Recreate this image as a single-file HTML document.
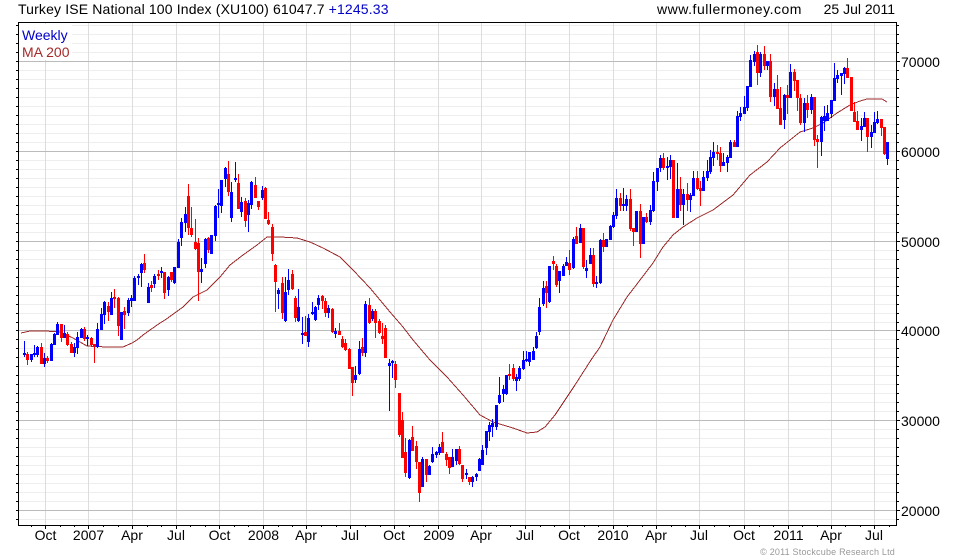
<!DOCTYPE html>
<html><head><meta charset="utf-8"><style>
html,body{margin:0;padding:0;background:#fff;width:980px;height:560px;overflow:hidden}
svg{display:block}
text{font-family:"Liberation Sans",Arial,sans-serif;font-size:14px;fill:#000}
</style></head><body>
<svg width="980" height="560" viewBox="0 0 980 560" xmlns="http://www.w3.org/2000/svg">
<rect width="980" height="560" fill="#fff"/>
<g shape-rendering="crispEdges" fill="none">
<path stroke="#eee" d="M19 25.5H896M19 34.5H896M19 43.5H896M19 52.5H896M19 70.5H896M19 79.5H896M19 88.5H896M19 97.5H896M19 106.5H896M19 115.5H896M19 124.5H896M19 133.5H896M19 142.5H896M19 160.5H896M19 169.5H896M19 178.5H896M19 187.5H896M19 196.5H896M19 205.5H896M19 214.5H896M19 223.5H896M19 232.5H896M19 250.5H896M19 259.5H896M19 268.5H896M19 277.5H896M19 286.5H896M19 295.5H896M19 304.5H896M19 313.5H896M19 322.5H896M19 339.5H896M19 348.5H896M19 357.5H896M19 366.5H896M19 375.5H896M19 384.5H896M19 393.5H896M19 402.5H896M19 411.5H896M19 429.5H896M19 438.5H896M19 447.5H896M19 456.5H896M19 465.5H896M19 474.5H896M19 483.5H896M19 492.5H896M19 501.5H896M19 519.5H896"/>
<path stroke="#ddd" d="M45.5 23V525M88.5 23V525M132.5 23V525M176.5 23V525M219.5 23V525M263.5 23V525M306.5 23V525M350.5 23V525M394.5 23V525M438.5 23V525M481.5 23V525M525.5 23V525M569.5 23V525M613.5 23V525M656.5 23V525M699.5 23V525M744.5 23V525M788.5 23V525M831.5 23V525M874.5 23V525"/>
<path stroke="#bbb" d="M19 61.5H896M19 151.5H896M19 241.5H896M19 330.5H896M19 420.5H896M19 510.5H896"/>
<rect x="19" y="24" width="53" height="36" fill="#fff"/>
<!-- axes -->
<path stroke="#000" d="M18.5 22V526M18 22.5H897M896.5 22V526M18 525.5H897"/>
<!-- left / right ticks -->
<path stroke="#000" d="M16 25.5H18M16 34.5H18M16 43.5H18M16 52.5H18M16 61.5H18M16 70.5H18M16 79.5H18M16 88.5H18M16 97.5H18M16 106.5H18M16 115.5H18M16 124.5H18M16 133.5H18M16 142.5H18M16 151.5H18M16 160.5H18M16 169.5H18M16 178.5H18M16 187.5H18M16 196.5H18M16 205.5H18M16 214.5H18M16 223.5H18M16 232.5H18M16 241.5H18M16 250.5H18M16 259.5H18M16 268.5H18M16 277.5H18M16 286.5H18M16 295.5H18M16 304.5H18M16 313.5H18M16 322.5H18M16 330.5H18M16 339.5H18M16 348.5H18M16 357.5H18M16 366.5H18M16 375.5H18M16 384.5H18M16 393.5H18M16 402.5H18M16 411.5H18M16 420.5H18M16 429.5H18M16 438.5H18M16 447.5H18M16 456.5H18M16 465.5H18M16 474.5H18M16 483.5H18M16 492.5H18M16 501.5H18M16 510.5H18M16 519.5H18"/>
<path stroke="#000" d="M897 25.5H899M897 34.5H899M897 43.5H899M897 52.5H899M897 61.5H900M897 70.5H899M897 79.5H899M897 88.5H899M897 97.5H899M897 106.5H899M897 115.5H899M897 124.5H899M897 133.5H899M897 142.5H899M897 151.5H900M897 160.5H899M897 169.5H899M897 178.5H899M897 187.5H899M897 196.5H899M897 205.5H899M897 214.5H899M897 223.5H899M897 232.5H899M897 241.5H900M897 250.5H899M897 259.5H899M897 268.5H899M897 277.5H899M897 286.5H899M897 295.5H899M897 304.5H899M897 313.5H899M897 322.5H899M897 330.5H900M897 339.5H899M897 348.5H899M897 357.5H899M897 366.5H899M897 375.5H899M897 384.5H899M897 393.5H899M897 402.5H899M897 411.5H899M897 420.5H900M897 429.5H899M897 438.5H899M897 447.5H899M897 456.5H899M897 465.5H899M897 474.5H899M897 483.5H899M897 492.5H899M897 501.5H899M897 510.5H900M897 519.5H899"/>
<!-- bottom ticks -->
<path stroke="#000" d="M45.5 526V529M88.5 526V529M132.5 526V529M176.5 526V529M219.5 526V529M263.5 526V529M306.5 526V529M350.5 526V529M394.5 526V529M438.5 526V529M481.5 526V529M525.5 526V529M569.5 526V529M613.5 526V529M656.5 526V529M699.5 526V529M744.5 526V529M788.5 526V529M831.5 526V529M874.5 526V529"/>
<path stroke="#000" d="M31.5 526V527M60.5 526V527M74.5 526V527M103.5 526V527M118.5 526V527M147.5 526V527M161.5 526V527M190.5 526V527M205.5 526V527M234.5 526V527M248.5 526V527M278.5 526V527M292.5 526V527M321.5 526V527M336.5 526V527M365.5 526V527M380.5 526V527M409.5 526V527M423.5 526V527M452.5 526V527M467.5 526V527M496.5 526V527M510.5 526V527M540.5 526V527M554.5 526V527M584.5 526V527M598.5 526V527M627.5 526V527M642.5 526V527M671.5 526V527M685.5 526V527M714.5 526V527M729.5 526V527M759.5 526V527M773.5 526V527M802.5 526V527M817.5 526V527M845.5 526V527M860.5 526V527M889.5 526V527"/>
<!-- MA 200 -->
<polyline stroke="#9c2a2a" points="21,333 30,331 45,331 60,332 73,338 87,346 107,347 123,347 132,343 137,340 143,335 150,330 160,323 165,320 183,307 193,297 207,290 220,277 230,265 243,255 257,245 267,237 280,237 297,238 310,242 323,248 340,257 353,270 370,288 390,312 403,327 413,340 430,360 447,377 463,395 480,415 493,422 513,428 527,433 537,432 545,427 555,415 565,400 575,385 591,360 600,347 613,320 627,297 637,284 653,263 663,247 673,235 683,227 697,218 713,210 733,195 750,175 767,162 780,148 790,140 800,132 813,128 823,123 837,113 850,105 860,101 867,99 882,99 887,102"/>
<!-- blue wicks -->
<path stroke="#00f" stroke-width="1" d="M24.5 341V357M31.5 354V362M34.5 345V357M37.5 346V357M44.5 353V367M51.5 343V361M54.5 333V345M57.5 322V335M64.5 325V338M74.5 343V357M77.5 332V354M81.5 328V338M87.5 335V346M97.5 323V348M101.5 308V330M104.5 301V324M111.5 292V315M121.5 312V340M128.5 298V316M131.5 295V307M134.5 276V301M138.5 274V285M141.5 263V287M148.5 283V303M154.5 274V288M161.5 267V278M168.5 276V296M174.5 267V284M178.5 239V268M181.5 218V246M185.5 207V232M201.5 258V283M205.5 238V268M211.5 235V254M215.5 205V241M218.5 189V218M221.5 180V213M225.5 167V187M231.5 182V222M235.5 162V182M241.5 197V217M248.5 200V232M251.5 181V209M262.5 186V200M278.5 288V309M285.5 277V322M288.5 269V295M298.5 289V322M302.5 317V344M308.5 314V347M312.5 302V315M315.5 306V321M318.5 295V310M328.5 305V318M335.5 328V338M355.5 366V383M359.5 341V375M365.5 301V357M372.5 309V321M389.5 359V411M392.5 360V378M409.5 439V479M422.5 457V487M429.5 465V475M432.5 447V463M436.5 451V458M439.5 444V455M452.5 449V467M456.5 449V465M466.5 469V479M472.5 476V487M476.5 473V481M479.5 458V471M482.5 445V465M486.5 431V455M489.5 422V441M492.5 419V437M496.5 405V430M499.5 377V404M503.5 385V402M506.5 375V395M516.5 374V391M519.5 366V381M523.5 351V370M526.5 351V362M529.5 352V366M533.5 347V360M536.5 332V349M539.5 298V335M543.5 281V306M549.5 266V303M559.5 271V293M563.5 264V276M566.5 257V266M573.5 237V269M580.5 224V243M586.5 260V278M590.5 248V264M596.5 276V288M600.5 239V284M606.5 239V247M610.5 225V240M613.5 212V228M616.5 189V219M623.5 188V211M626.5 195V211M636.5 211V232M643.5 217V244M650.5 205V225M653.5 172V212M657.5 168V191M660.5 155V172M667.5 157V180M670.5 155V179M677.5 163V218M683.5 189V225M690.5 193V212M693.5 171V196M703.5 171V191M707.5 160V181M710.5 150V174M713.5 142V166M723.5 153V166M727.5 155V172M730.5 140V158M737.5 111V147M740.5 107V121M744.5 96V114M747.5 86V111M750.5 55V87M754.5 51V66M760.5 52V77M767.5 61V70M774.5 83V106M784.5 94V129M790.5 64V98M804.5 98V132M811.5 94V114M821.5 116V156M824.5 106V131M827.5 105V120M831.5 100V118M834.5 63V101M837.5 70V83M841.5 73V95M844.5 67V84M861.5 118V141M864.5 112V127M871.5 125V148M874.5 112V133M877.5 111V124M887.5 142V165"/>
<!-- blue bodies -->
<path stroke="#00f" stroke-width="3" d="M24.5 353V355M31.5 354V360M34.5 353V355M37.5 347V355M44.5 358V364M51.5 344V361M54.5 334V345M57.5 324V335M64.5 333V338M74.5 347V353M77.5 337V348M81.5 329V338M87.5 337V339M97.5 329V347M101.5 314V330M104.5 302V315M111.5 298V315M121.5 312V340M128.5 300V313M131.5 298V301M134.5 278V301M138.5 276V278M141.5 264V273M148.5 287V303M154.5 276V284M161.5 271V273M168.5 277V290M174.5 267V283M178.5 242V268M181.5 222V238M185.5 214V223M201.5 269V272M205.5 239V264M211.5 235V254M215.5 206V236M218.5 203V205M221.5 180V206M225.5 168V179M231.5 192V218M235.5 178V180M241.5 202V212M248.5 203V215M251.5 182V205M262.5 190V198M278.5 290V294M285.5 292V321M288.5 280V290M298.5 307V321M302.5 333V335M308.5 318V342M312.5 312V314M315.5 307V320M318.5 298V305M328.5 308V313M335.5 331V334M355.5 375V380M359.5 349V374M365.5 304V353M372.5 311V319M389.5 363V366M392.5 361V363M409.5 440V478M422.5 459V487M429.5 466V475M432.5 454V462M436.5 452V455M439.5 447V453M452.5 457V467M456.5 449V461M466.5 473V475M472.5 477V482M476.5 474V477M479.5 459V471M482.5 450V465M486.5 431V448M489.5 425V432M492.5 423V427M496.5 405V427M499.5 395V403M503.5 389V394M506.5 375V394M516.5 377V381M519.5 368V379M523.5 360V369M526.5 359V361M529.5 352V362M533.5 351V360M536.5 336V348M539.5 307V332M543.5 288V304M549.5 266V302M559.5 271V281M563.5 266V276M566.5 262V266M573.5 239V268M580.5 228V243M586.5 268V271M590.5 255V264M596.5 282V284M600.5 240V283M606.5 239V247M610.5 226V240M613.5 215V227M616.5 198V216M623.5 204V206M626.5 199V206M636.5 211V232M643.5 217V244M650.5 210V222M653.5 181V211M657.5 168V182M660.5 158V168M667.5 166V168M670.5 160V167M677.5 189V218M683.5 194V205M690.5 195V200M693.5 178V196M703.5 177V191M707.5 171V178M710.5 157V172M713.5 152V158M723.5 162V166M727.5 157V163M730.5 142V158M737.5 116V147M740.5 113V117M744.5 107V114M747.5 86V108M750.5 60V87M754.5 54V62M760.5 54V73M767.5 61V66M774.5 89V97M784.5 95V120M790.5 72V98M804.5 103V123M811.5 97V110M821.5 117V142M824.5 116V121M827.5 113V121M831.5 100V114M834.5 78V101M837.5 75V79M841.5 73V76M844.5 68V74M861.5 126V130M864.5 118V127M871.5 132V137M874.5 122V133M877.5 119V123M887.5 142V159"/>
<!-- red wicks -->
<path stroke="#f00" stroke-width="1" d="M27.5 352V365M41.5 343V364M47.5 356V363M61.5 324V342M67.5 332V346M71.5 342V353M84.5 327V341M91.5 337V347M94.5 344V363M108.5 302V321M114.5 289V308M118.5 297V336M124.5 307V329M144.5 254V273M151.5 281V292M158.5 270V280M164.5 272V299M171.5 272V282M188.5 184V235M191.5 207V237M195.5 219V250M198.5 238V301M208.5 237V253M228.5 161V196M238.5 174V209M245.5 198V227M255.5 177V198M258.5 201V210M265.5 187V219M268.5 212V225M272.5 224V261M275.5 264V312M282.5 277V319M292.5 270V290M295.5 296V322M305.5 316V336M322.5 295V309M325.5 298V317M332.5 308V333M339.5 323V335M342.5 336V348M345.5 339V351M349.5 348V369M352.5 367V396M362.5 338V356M369.5 298V324M375.5 309V338M379.5 319V334M382.5 323V344M385.5 325V358M395.5 361V388M399.5 393V437M402.5 412V458M405.5 438V477M412.5 426V451M416.5 441V469M419.5 462V502M426.5 459V482M442.5 432V453M446.5 452V466M449.5 457V474M459.5 446V465M462.5 465V482M469.5 477V485M509.5 364V380M513.5 364V381M546.5 281V308M553.5 256V270M556.5 264V287M569.5 250V275M576.5 227V244M583.5 228V269M593.5 248V287M603.5 233V252M620.5 193V211M630.5 189V231M633.5 228V246M640.5 204V258M646.5 213V223M663.5 153V170M673.5 160V218M680.5 177V211M687.5 183V211M697.5 171V190M700.5 181V206M717.5 145V160M720.5 147V172M734.5 140V147M757.5 45V85M764.5 46V70M770.5 54V102M777.5 75V109M780.5 87V125M787.5 85V114M794.5 69V91M797.5 80V111M800.5 94V125M807.5 95V118M814.5 97V146M817.5 135V168M847.5 58V78M851.5 77V111M854.5 102V122M857.5 111V130M867.5 118V152M881.5 119V136M884.5 127V155"/>
<!-- red bodies -->
<path stroke="#f00" stroke-width="3" d="M27.5 354V360M41.5 347V364M47.5 358V361M61.5 324V338M67.5 334V345M71.5 344V353M84.5 329V339M91.5 338V345M94.5 344V347M108.5 306V312M114.5 297V299M118.5 298V326M124.5 311V315M144.5 263V270M151.5 285V288M158.5 274V276M164.5 272V293M171.5 272V280M188.5 196V228M191.5 228V235M195.5 242V249M198.5 243V272M208.5 238V250M228.5 174V192M238.5 183V209M245.5 201V221M255.5 185V198M258.5 201V207M265.5 188V219M268.5 220V224M272.5 227V254M275.5 265V282M282.5 283V313M292.5 274V289M295.5 298V318M305.5 332V336M322.5 296V301M325.5 301V313M332.5 309V332M339.5 331V335M342.5 339V347M345.5 343V350M349.5 349V369M352.5 367V383M362.5 347V353M369.5 305V323M375.5 311V323M379.5 321V333M382.5 336V339M385.5 328V358M395.5 364V380M399.5 393V435M402.5 420V458M405.5 452V473M412.5 437V451M416.5 446V462M419.5 462V493M426.5 459V475M442.5 442V453M446.5 454V460M449.5 457V468M459.5 449V464M462.5 465V479M469.5 477V482M509.5 374V376M513.5 368V379M546.5 286V293M553.5 261V264M556.5 266V285M569.5 263V270M576.5 236V244M583.5 228V267M593.5 255V284M603.5 240V247M620.5 198V206M630.5 199V229M633.5 228V232M640.5 211V244M646.5 217V222M663.5 158V168M673.5 160V218M680.5 189V205M687.5 194V200M697.5 178V189M700.5 188V191M717.5 152V154M720.5 153V166M734.5 142V147M757.5 52V73M764.5 54V66M770.5 61V97M777.5 89V109M780.5 108V125M787.5 95V98M794.5 72V81M797.5 80V98M800.5 98V123M807.5 103V110M814.5 97V140M817.5 139V142M847.5 68V78M851.5 77V111M854.5 112V122M857.5 121V130M867.5 118V137M881.5 119V128M884.5 127V154"/>
</g>
<text x="18" y="14" style="letter-spacing:.15px">Turkey ISE National 100 Index (XU100) 61047.7 <tspan style="fill:#0000c8">+1245.33</tspan></text>
<text x="657" y="14" style="letter-spacing:.52px">www.fullermoney.com</text>
<text x="895" y="14" text-anchor="end">25 Jul 2011</text>
<text x="22" y="40" style="fill:#0000cc">Weekly</text>
<text x="22" y="57" style="fill:#a52a2a">MA 200</text>
<text x="901" y="67">70000</text>
<text x="901" y="157">60000</text>
<text x="901" y="247">50000</text>
<text x="901" y="336">40000</text>
<text x="901" y="426">30000</text>
<text x="901" y="516">20000</text>
<g text-anchor="middle">
<text x="45.5" y="540">Oct</text><text x="88.5" y="540">2007</text><text x="132" y="540">Apr</text><text x="176" y="540">Jul</text><text x="219.5" y="540">Oct</text><text x="263.5" y="540">2008</text><text x="306" y="540">Apr</text><text x="350" y="540">Jul</text><text x="394" y="540">Oct</text><text x="439" y="540">2009</text><text x="481" y="540">Apr</text><text x="525" y="540">Jul</text><text x="569" y="540">Oct</text><text x="613" y="540">2010</text><text x="656" y="540">Apr</text><text x="699" y="540">Jul</text><text x="744" y="540">Oct</text><text x="788.5" y="540">2011</text><text x="831" y="540">Apr</text><text x="874" y="540">Jul</text>
</g>
<text x="895" y="555" text-anchor="end" style="font-size:9px;fill:#999;letter-spacing:.2px">© 2011 Stockcube Research Ltd</text>
</svg>
</body></html>
